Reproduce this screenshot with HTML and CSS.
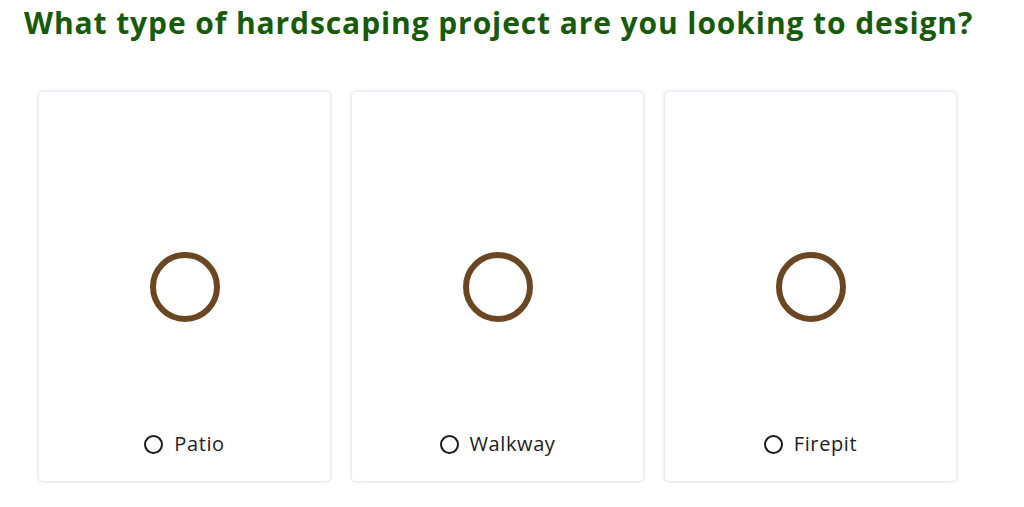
FILE: index.html
```html
<!DOCTYPE html>
<html lang="en">
<head>
<meta charset="utf-8">
<title>Hardscaping project</title>
<link rel="stylesheet" href="styles.css">
</head>
<body>
<h1 class="title">What type of hardscaping project are you looking to design?</h1>
<div class="options">
  <label class="card">
    <span class="art"><span class="ring"></span></span>
    <span class="choice"><span class="radio"></span><span class="text">Patio</span></span>
  </label>
  <label class="card">
    <span class="art"><span class="ring"></span></span>
    <span class="choice"><span class="radio"></span><span class="text">Walkway</span></span>
  </label>
  <label class="card">
    <span class="art"><span class="ring"></span></span>
    <span class="choice"><span class="radio"></span><span class="text">Firepit</span></span>
  </label>
</div>
</body>
</html>
```
FILE: styles.css
```css
html, body {
  margin: 0;
  padding: 0;
  background: #ffffff;
}
body {
  font-family: "Open Sans", "Liberation Sans", sans-serif;
  width: 1024px;
  height: 507px;
  overflow: hidden;
}
.title {
  margin: 0;
  padding: 5px 0 0 24px;
  font-size: 30px;
  line-height: 36px;
  font-weight: 700;
  color: #175a08;
  letter-spacing: 0.9px;
  white-space: nowrap;
}
.options {
  display: flex;
  gap: 20px;
  padding: 50px 0 0 38px;
}
.card {
  box-sizing: border-box;
  width: 293px;
  height: 391px;
  border: 1px solid #ebebf7;
  border-radius: 5px;
  box-shadow: 0 0 3px rgba(200, 200, 235, 0.6);
  display: grid;
  grid-template-rows: 1fr auto 1fr;
  justify-items: center;
  background: #fff;
}
.art {
  grid-row: 2;
  display: flex;
}
.ring {
  box-sizing: border-box;
  width: 70px;
  height: 70px;
  border: 6px solid #6b4623;
  border-radius: 50%;
}
.choice {
  grid-row: 3;
  align-self: end;
  display: flex;
  align-items: center;
  gap: 11px;
  margin-bottom: 27px;
  height: 20px;
}
.radio {
  box-sizing: border-box;
  width: 19px;
  height: 19px;
  border: 2px solid #1a1a1a;
  border-radius: 50%;
}
.text {
  font-size: 20px;
  color: #222;
  line-height: 20px;
  letter-spacing: 0.6px;
}
```
